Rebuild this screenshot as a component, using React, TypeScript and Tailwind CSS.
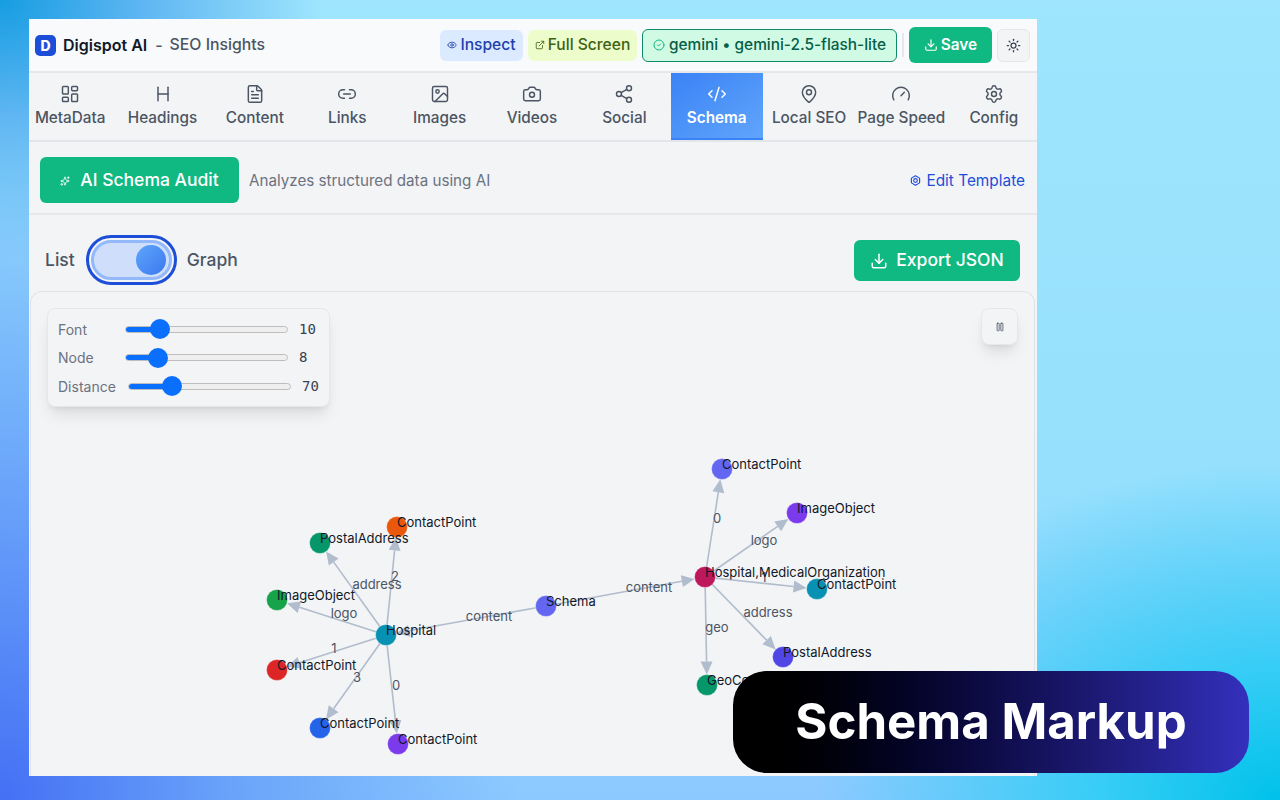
import { Bolt, CircleCheck, CodeXml, Download, ExternalLink, Eye, FileText, Gauge, Heading, Image, Camera, LayoutDashboard, Link2, MapPin, Pause, Settings, Share2, Sparkles, Sun } from 'lucide-react';

const tabs = [
  { label: 'MetaData', icon: LayoutDashboard },
  { label: 'Headings', icon: Heading },
  { label: 'Content', icon: FileText },
  { label: 'Links', icon: Link2 },
  { label: 'Images', icon: Image },
  { label: 'Videos', icon: Camera },
  { label: 'Social', icon: Share2 },
  { label: 'Schema', icon: CodeXml, active: true },
  { label: 'Local SEO', icon: MapPin },
  { label: 'Page Speed', icon: Gauge },
  { label: 'Config', icon: Settings },
];

const sliders = [
  { label: 'Font', value: '10', thumb: 34, labelWidth: 'w-[67px]' },
  { label: 'Node', value: '8', thumb: 32, labelWidth: 'w-[67px]' },
  { label: 'Distance', value: '70', thumb: 43, labelWidth: 'w-[70px]' },
];

const nodes = [
  { x: 546, y: 605, color: '#6366f1', label: 'Schema' },
  { x: 386, y: 634, color: '#0891b2', label: 'Hospital' },
  { x: 705, y: 576, color: '#be185d', label: 'Hospital,MedicalOrganization' },
  { x: 397, y: 526, color: '#ea580c', label: 'ContactPoint' },
  { x: 320, y: 542, color: '#059669', label: 'PostalAddress' },
  { x: 277, y: 599, color: '#16a34a', label: 'ImageObject' },
  { x: 277, y: 669, color: '#dc2626', label: 'ContactPoint' },
  { x: 320, y: 727, color: '#2563eb', label: 'ContactPoint' },
  { x: 398, y: 743, color: '#7c3aed', label: 'ContactPoint' },
  { x: 722, y: 468, color: '#6366f1', label: 'ContactPoint' },
  { x: 797, y: 512, color: '#7c3aed', label: 'ImageObject' },
  { x: 817, y: 588, color: '#0891b2', label: 'ContactPoint' },
  { x: 783, y: 656, color: '#4f46e5', label: 'PostalAddress' },
  { x: 707, y: 684, color: '#059669', label: 'GeoCoordinates' },
];

// from, to, label and where the label sits
const edges = [
  { a: 0, b: 1, label: 'content', lx: 489, ly: 620 },
  { a: 0, b: 2, label: 'content', lx: 649, ly: 591 },
  { a: 1, b: 3, label: '2', lx: 395, ly: 580 },
  { a: 1, b: 4, label: 'address', lx: 377, ly: 588 },
  { a: 1, b: 5, label: 'logo', lx: 344, ly: 617 },
  { a: 1, b: 6, label: '1', lx: 334, ly: 652 },
  { a: 1, b: 7, label: '3', lx: 357, ly: 681 },
  { a: 1, b: 8, label: '0', lx: 396, ly: 689 },
  { a: 2, b: 9, label: '0', lx: 717, ly: 522 },
  { a: 2, b: 10, label: 'logo', lx: 764, ly: 544 },
  { a: 2, b: 11, label: '1', lx: 764, ly: 581 },
  { a: 2, b: 12, label: 'address', lx: 768, ly: 616 },
  { a: 2, b: 13, label: 'geo', lx: 717, ly: 631 },
];

function GraphCanvas() {
  return (
    <svg width="1008" height="485" viewBox="29 291 1008 485" className="block">
      {edges.map(e => {
        const from = nodes[e.a];
        const to = nodes[e.b];
        const dx = to.x - from.x;
        const dy = to.y - from.y;
        const len = Math.hypot(dx, dy);
        const ux = dx / len;
        const uy = dy / len;
        const tipX = to.x - ux * 10.5;
        const tipY = to.y - uy * 10.5;
        const baseX = tipX - ux * 13;
        const baseY = tipY - uy * 13;
        return (
          <g key={`${e.a}-${e.b}`}>
            <line x1={from.x} y1={from.y} x2={baseX} y2={baseY} stroke="#b1bccd" strokeWidth="1.6" />
            <polygon
              points={`${tipX},${tipY} ${baseX - uy * 6},${baseY + ux * 6} ${baseX + uy * 6},${baseY - ux * 6}`}
              fill="#b1bccd"
            />
          </g>
        );
      })}
      {edges.map(e => (
        <text key={e.label + e.lx} x={e.lx} y={e.ly} textAnchor="middle" fontSize="13" fill="#4b5563">
          {e.label}
        </text>
      ))}
      {nodes.map(n => (
        <circle key={`${n.x}-${n.y}`} cx={n.x} cy={n.y} r="10.5" fill={n.color} stroke="#ffffff" strokeOpacity="0.35" strokeWidth="1" />
      ))}
      {nodes.map(n => (
        <text key={`t${n.x}-${n.y}`} x={n.x} y={n.y} fontSize="13" fill="#111827">
          {n.label}
        </text>
      ))}
    </svg>
  );
}

export default function App() {
  return (
    <div className="relative h-[800px] w-[1280px] overflow-hidden pl-[29px] pt-[19px] font-['Inter',sans-serif] bg-[radial-gradient(ellipse_460px_340px_at_100%_100%,#00c2ea_0%,#38cdf6_40%,transparent_100%),radial-gradient(ellipse_320px_260px_at_0%_0%,#169de2_0%,#5fb6f2_45%,transparent_100%),radial-gradient(ellipse_520px_700px_at_0%_100%,#4470f4_0%,#6aa4fa_45%,transparent_100%),linear-gradient(180deg,#9ee5fd_0%,#96e0fd_60%,#8cc9ff_100%)]">
      <div className="flex h-[757px] w-[1008px] flex-col overflow-hidden bg-[#f3f4f6]">
        {/* Header */}
        <header className="flex h-[54px] shrink-0 items-center border-b-2 border-[#e5e7eb] bg-[#f9fafb] pl-[6px] pr-[7px]">
          <div className="flex h-[21px] w-[21px] items-center justify-center rounded-[5px] bg-[#1d4ed8] text-[14px] font-extrabold text-white">D</div>
          <span className="ml-[7px] text-[16px] font-semibold text-[#111827]">Digispot AI</span>
          <span className="ml-[8px] text-[16px] font-medium text-[#4b5563]">-</span>
          <span className="ml-[7px] text-[15.8px] font-medium text-[#4b5563]">SEO Insights</span>
          <div className="ml-auto flex items-center">
            <div className="flex h-[31px] w-[83px] items-center justify-center gap-[3px] rounded-md bg-[#dbeafe] text-[15.6px] font-medium text-[#1e40af]">
              <Eye size={10} />
              Inspect
            </div>
            <div className="ml-[5px] flex h-[31px] w-[109px] items-center justify-center gap-[3px] rounded-md bg-[#ecfccb] text-[15.6px] font-medium text-[#3f6212]">
              <ExternalLink size={10} />
              Full Screen
            </div>
            <div className="ml-[5px] flex h-[33px] w-[255px] items-center justify-center gap-[4px] rounded-md border border-[#0f8a68] bg-[#d1fae5] text-[15.4px] font-medium text-[#065f46]">
              <CircleCheck size={12} className="text-[#10b981]" />
              gemini • gemini-2.5-flash-lite
            </div>
            <div className="ml-[5px] h-[24px] w-[2px] bg-[#e5e7eb]" />
            <button className="ml-[5px] flex h-[36px] w-[83px] items-center justify-center gap-[3px] rounded-md bg-[#10b981] text-[15.4px] font-semibold text-white">
              <Download size={14} />
              Save
            </button>
            <button className="ml-[5px] flex h-[33px] w-[33px] items-center justify-center rounded-md border border-[#e5e7eb] bg-[#f3f4f6] text-[#374151]">
              <Sun size={15} />
            </button>
          </div>
        </header>

        {/* Tabs */}
        <nav className="-ml-[5px] -mr-[3px] grid h-[69px] shrink-0 grid-cols-11 border-b-2 border-[#e2e5ea] bg-[#f3f4f6]">
          {tabs.map(t => (
            <div
              key={t.label}
              className={
                t.active
                  ? 'flex flex-col items-center gap-[3px] border-b-2 border-[#3b82f6] bg-linear-to-br from-[#3b82f6] to-[#60a5fa] pt-[11px] text-[15.3px] font-semibold text-white'
                  : 'flex flex-col items-center gap-[3px] pt-[11px] text-[15.3px] font-medium text-[#4b5563]'
              }
            >
              <t.icon size={20} strokeWidth={1.75} />
              <span className="whitespace-nowrap">{t.label}</span>
            </div>
          ))}
        </nav>

        {/* Audit bar */}
        <div className="flex h-[73px] shrink-0 items-center border-b-2 border-[#e5e7eb] pl-[11px] pr-[12px] pt-[5px]">
          <button className="flex h-[46px] w-[199px] items-center justify-center gap-[10px] rounded-md bg-[#10b981] pt-[1px] text-[17.5px] font-medium text-white">
            <Sparkles size={10} />
            AI Schema Audit
          </button>
          <span className="ml-[10px] pt-[2px] text-[15.2px] text-[#6b7280]">Analyzes structured data using AI</span>
          <span className="ml-auto flex items-center gap-[5px] pt-[2px] text-[15.4px] text-[#1d4ed8]">
            <Bolt size={11} strokeWidth={2.5} />
            Edit Template
          </span>
        </div>

        {/* View switch */}
        <div className="flex h-[76px] shrink-0 items-center pl-[16px] pr-[17px] pt-[14px]">
          <span className="pt-[1px] text-[17.5px] font-medium text-[#4b5563]">List</span>
          <div className="ml-[11px] flex h-[50px] w-[91px] items-center justify-end rounded-full border-[3px] border-[#1d4ed8] p-[2px]">
            <div className="flex h-full w-full items-center justify-end rounded-full border-[3px] border-[#93b9fb] bg-[#cfdefa] pr-[3px]">
              <div className="h-[30px] w-[30px] rounded-full bg-linear-to-br from-[#60a5fa] to-[#3b78f0]" />
            </div>
          </div>
          <span className="ml-[10px] pt-[1px] text-[17.5px] font-medium text-[#4b5563]">Graph</span>
          <button className="ml-auto flex h-[41px] w-[166px] items-center justify-center gap-[8px] rounded-md bg-[#10b981] pt-[1px] text-[17.5px] font-medium text-white">
            <Download size={18} />
            Export JSON
          </button>
        </div>

        {/* Graph */}
        <div className="relative ml-[1px] mr-[2px] min-h-0 flex-1 overflow-hidden rounded-t-xl border-x border-t border-[#dfe2e7]">
          <div className="absolute -left-[2px] top-0">
            <GraphCanvas />
          </div>
          <div className="absolute left-[16px] top-[16px] flex w-[283px] flex-col gap-[8.5px] rounded-lg border border-[#e5e7eb] bg-[#f3f4f6] px-[10px] py-[10px] shadow-lg">
            {sliders.map(s => (
              <div key={s.label} className="flex h-[20px] items-center text-[14px] text-[#6b7280]">
                <span className={s.labelWidth}>{s.label}</span>
                <div className="relative h-[7px] w-[163px] rounded-full border border-[#bdbdbd] bg-[#efefef]">
                  <div className="h-full rounded-full bg-[#0b6ffd]" style={{ width: s.thumb }} />
                  <div className="absolute top-1/2 h-[20px] w-[20px] -translate-x-1/2 -translate-y-1/2 rounded-full bg-[#0b6ffd]" style={{ left: s.thumb }} />
                </div>
                <span className="ml-[11px] font-['DejaVu_Sans_Mono',monospace] text-[14px] text-[#374151]">{s.value}</span>
              </div>
            ))}
          </div>
          <button className="absolute right-[16px] top-[16px] flex h-[37px] w-[37px] items-center justify-center rounded-lg border border-[#e5e7eb] bg-[#f3f4f6] text-[#4b5563] shadow-lg">
            <Pause size={10} />
          </button>
        </div>
      </div>

      {/* Caption badge */}
      <div className="absolute left-[733px] top-[671px] flex h-[102px] w-[516px] items-center justify-center rounded-[34px] bg-linear-to-r from-black to-[#3430bd] text-[49.2px] font-bold text-white">
        Schema Markup
      </div>
    </div>
  );
}
